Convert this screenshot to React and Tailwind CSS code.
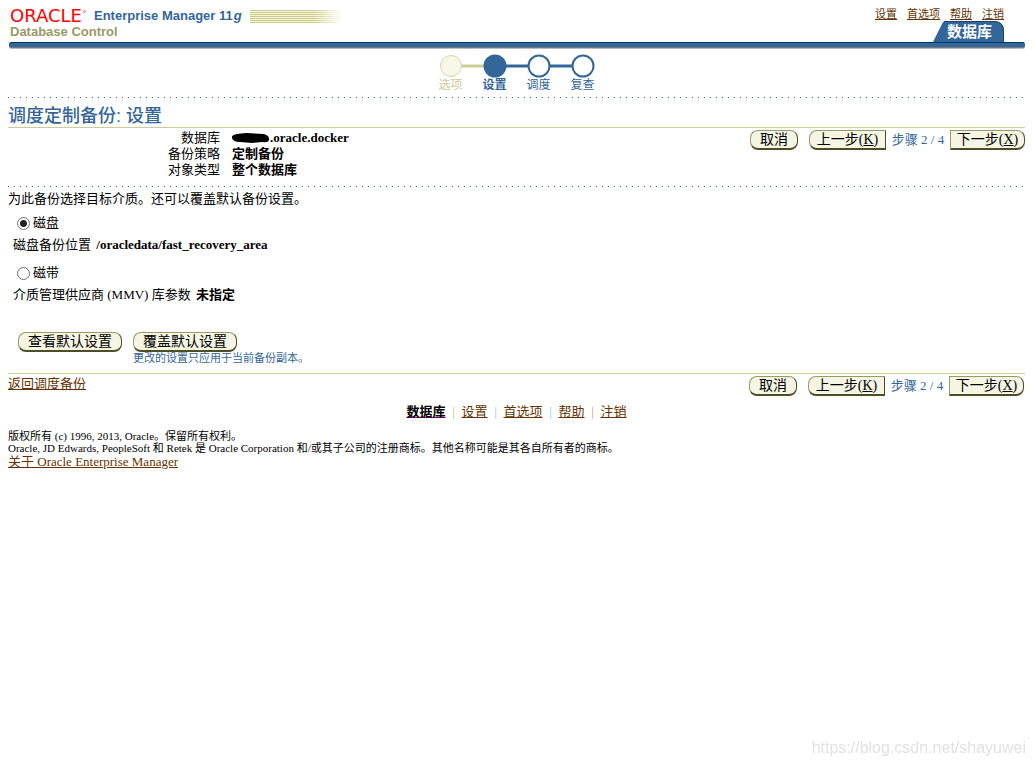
import clsx from "clsx";

const NAV = ["设置", "首选项", "帮助", "注销"];

const SEPARATORS = ["text-[#b8b860]", "text-[#7cc4ea]", "text-[#7cc4ea]", "text-[#c89090]"];

const STEPS = [
    { label: "选项", state: "done" },
    { label: "设置", state: "current" },
    { label: "调度", state: "next" },
    { label: "复查", state: "next" },
];

const SUMMARY = [
    { label: "备份策略", value: "定制备份" },
    { label: "对象类型", value: "整个数据库" },
];

function DottedRule() {
    return <div className="h-px bg-[repeating-linear-gradient(90deg,#336699_0_1px,transparent_1px_6px)]" />;
}

function Button({ children, shape = "rounded-[8px]", className }) {
    return (
        <button
            type="button"
            className={clsx(
                "h-5 border border-b-2 border-t-[#999966] border-l-[#999966] border-r-[#4d4d26] border-b-[#4d4d26] bg-[#f5f5e4] text-center text-[14px] leading-4 whitespace-nowrap text-black",
                shape,
                className
            )}
        >
            {children}
        </button>
    );
}

function Header() {
    return (
        <header>
            <div className="flex h-[42px] justify-between">
                <div className="flex flex-col pt-2 pl-[2px] font-['Liberation_Sans',sans-serif] font-bold">
                    <div className="flex h-4 items-center">
                        <span className="flex w-[84px] items-start font-['DejaVu_Sans',sans-serif] text-[18px] leading-4 font-normal text-[#ff0000]">
                            ORACLE
                            <svg viewBox="0 0 3 3" className="mt-[2px] ml-px size-[3px]" aria-hidden="true">
                                <circle cx="1.500" cy="1.500" r="1" fill="none" stroke="#ff6666" />
                            </svg>
                        </span>
                        <span className="text-[13px] leading-4 text-[#336699]">
                            Enterprise Manager 11<i className="pl-px">g</i>
                        </span>
                        <span className="ml-2 h-[13px] w-[92px] bg-[repeating-linear-gradient(180deg,#cccc8c_0_1px,#f5f5dc_1px_2px)] mask-r-from-70%" />
                    </div>
                    <span className="text-[13px] leading-4 text-[#999966]">Database Control</span>
                </div>
                <div className="flex flex-col items-end pr-[21px]">
                    <nav className="flex h-[21px] items-end gap-[10px] pb-px text-[11px] leading-3">
                        {NAV.map((item) => (
                            <a key={item} href="#" className="text-[#663300] underline">{item}</a>
                        ))}
                    </nav>
                    <a href="#" className="relative block h-[21px] w-[71px] pl-[14px] text-[15px] leading-[23px] font-bold whitespace-nowrap text-white">
                        <svg viewBox="0 0 71 21" className="absolute inset-0 size-full" aria-hidden="true">
                            <path d="M0 21 9 3Q10 0 13 0H62Q71 1 71 10V21Z" fill="#336699" />
                            <path d="M11 .5H62Q70.500 1 70.500 10V21" fill="none" stroke="#164478" />
                        </svg>
                        <span className="relative">数据库</span>
                    </a>
                </div>
            </div>
            <div className="ml-px h-[5px] rounded-[3px] border-t border-[#003366] bg-[#336699] shadow-[0_1px_0_#777,0_2px_0_#bbb]" />
        </header>
    );
}

function Stepper() {
    return (
        <ol className="mx-auto mt-[7px] flex w-44 text-center text-[12px]">
            {STEPS.map(({ label, state }, i) => (
                <li
                    key={label}
                    className={clsx(
                        "w-11",
                        state === "done" ? "text-[#cccc99]" : "text-[#336699]",
                        state === "current" && "font-bold"
                    )}
                >
                    <svg viewBox="0 0 44 24" className="h-6 w-11" aria-hidden="true">
                        {i > 0 && <path d="M0 12H12" stroke={i === 1 ? "#cccc99" : "#336699"} strokeWidth="3" />}
                        {i < STEPS.length - 1 && (
                            <path d="M32 12H44" stroke={i === 0 ? "#cccc99" : "#336699"} strokeWidth="3" />
                        )}
                        <circle
                            cx="22"
                            cy="12"
                            r="10.500"
                            fill={state === "done" ? "#f7f7e7" : state === "current" ? "#336699" : "#ffffff"}
                            stroke={state === "done" ? "#d6d6ad" : "#336699"}
                            strokeWidth={state === "done" ? 1 : 2}
                        />
                    </svg>
                    <span className="block leading-[14px]">{label}</span>
                </li>
            ))}
        </ol>
    );
}

function WizardButtons() {
    return (
        <div className="flex items-center self-start">
            <Button className="w-12">取消</Button>
            <Button shape="rounded-l-[8px]" className="ml-[11px] w-[77px]">上一步(<u>K</u>)</Button>
            <span className="w-[64px] text-center whitespace-nowrap text-[#336699]">步骤 2 / 4</span>
            <Button shape="rounded-r-[8px]" className="w-[75px]">下一步(<u>X</u>)</Button>
        </div>
    );
}

function Radio({ label, defaultChecked }) {
    return (
        <label className="flex h-5 items-center gap-[3px] pl-[9px]">
            <input
                type="radio"
                name="media"
                defaultChecked={defaultChecked}
                className="size-[13px] appearance-none rounded-full border border-[#707070] bg-white checked:bg-[radial-gradient(circle,#222_0_3px,transparent_4px)]"
            />
            {label}
        </label>
    );
}

export default function App() {
    return (
        <div className="min-h-screen bg-white pr-[9px] pl-2 font-['Liberation_Serif','Noto_Sans_CJK_SC',serif] text-[13px] leading-4 text-black">
            <Header />
            <main>
                <Stepper />
                <div className="mt-[5px]">
                    <DottedRule />
                </div>
                <h1 className="mt-[7px] font-['Liberation_Sans','Noto_Sans_CJK_SC',sans-serif] text-[18px] leading-[22px] font-medium text-[#336699]">
                    调度定制备份: 设置
                </h1>
                <div className="flex justify-between border-t border-[#cccc99] pt-[2px]">
                    <table>
                        <tbody>
                            <tr>
                                <th scope="row" className="w-[224px] pr-3 text-right font-normal">数据库</th>
                                <td className="font-bold">
                                    <svg viewBox="0 0 38 12" className="inline-block h-3 w-[38px] align-[-2px]" aria-hidden="true">
                                        <path d="M0 6Q-1 3 5 2L14 1 32 2Q38 4 37 8 36 11 30 10L20 11 8 10Q1 10 0 6Z" />
                                    </svg>
                                    .oracle.docker
                                </td>
                            </tr>
                            {SUMMARY.map(({ label, value }) => (
                                <tr key={label}>
                                    <th scope="row" className="pr-3 text-right font-normal">{label}</th>
                                    <td className="font-bold">{value}</td>
                                </tr>
                            ))}
                        </tbody>
                    </table>
                    <WizardButtons />
                </div>
                <div className="mt-2">
                    <DottedRule />
                </div>
                <p className="mt-1">为此备份选择目标介质。还可以覆盖默认备份设置。</p>
                <div className="mt-[6px]">
                    <Radio label="磁盘" defaultChecked />
                    <p className="mt-1 pl-[5px]">磁盘备份位置 <b className="pl-[2px]">/oracledata/fast_recovery_area</b></p>
                </div>
                <div className="mt-[10px]">
                    <Radio label="磁带" />
                    <p className="mt-1 pl-[5px]">介质管理供应商 (MMV) 库参数 <b className="pl-[2px]">未指定</b></p>
                </div>
                <div className="mt-[29px] flex items-start gap-[11px] pl-[10px]">
                    <Button className="w-[104px]">查看默认设置</Button>
                    <div>
                        <Button className="block w-[104px]">覆盖默认设置</Button>
                        <p className="text-[11px] leading-3 text-[#336699]">更改的设置只应用于当前备份副本。</p>
                    </div>
                </div>
                <div className="mt-[9px] flex items-start justify-between border-t border-[#cccc99] pt-[2px] pr-px">
                    <a href="#" className="text-[#663300] underline">返回调度备份</a>
                    <WizardButtons />
                </div>
            </main>
            <footer>
                <nav className="mt-2 flex justify-center">
                    <a href="#" className="font-bold underline decoration-[#800080]">数据库</a>
                    {NAV.map((item, i) => (
                        <span key={item} className="flex">
                            <span className={clsx("w-4 text-center", SEPARATORS[i])}>|</span>
                            <a href="#" className="text-[#663300] underline">{item}</a>
                        </span>
                    ))}
                </nav>
                <div className="mt-[10px] text-[11px] leading-3">
                    <p>版权所有 (c) 1996, 2013, Oracle。保留所有权利。</p>
                    <p>Oracle, JD Edwards, PeopleSoft 和 Retek 是 Oracle Corporation 和/或其子公司的注册商标。其他名称可能是其各自所有者的商标。</p>
                </div>
                <a href="#" className="text-[#663300] underline">关于 Oracle Enterprise Manager</a>
            </footer>
            <span className="fixed right-2 bottom-2 font-['Liberation_Sans',sans-serif] text-[16px] leading-5 text-[#e2e2e2]">
                https://blog.csdn.net/shayuwei
            </span>
        </div>
    );
}
